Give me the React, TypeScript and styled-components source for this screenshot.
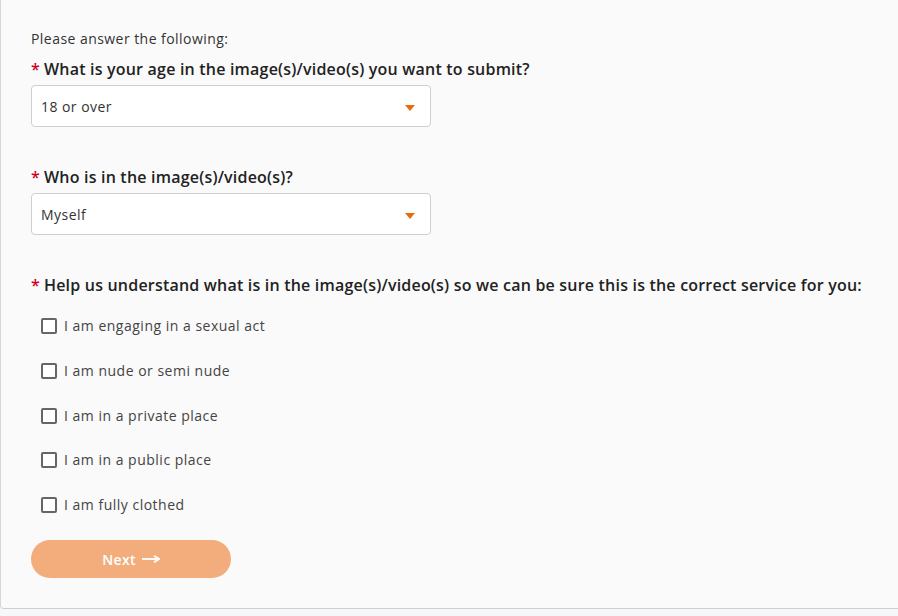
import styled, { createGlobalStyle } from "styled-components"

const GlobalStyle = createGlobalStyle`
    body {
        margin: 0;
        background: #f6f7f9;
        font-family: "Open Sans", "Liberation Sans", sans-serif;
        color: #333;
    }
`

const options = [
    "I am engaging in a sexual act",
    "I am nude or semi nude",
    "I am in a private place",
    "I am in a public place",
    "I am fully clothed",
]

const Caret = () => (
    <svg width="10" height="6" viewBox="0 0 10 6">
        <path d="M0 0 H10 L5 6 Z" fill="#e36c12" />
    </svg>
)

const Arrow = () => (
    <svg width="18" height="8" viewBox="0 0 18 8">
        <path d="M0 4 H15" stroke="#fff" strokeWidth="1.8" />
        <path d="M12 0.8 L17 4 L12 7.2" stroke="#fff" strokeWidth="1.8" fill="none" />
    </svg>
)

export default function App() {
    return (
        <>
            <GlobalStyle />
            <Panel>
                <Intro>Please answer the following:</Intro>

                <Question>
                    <Required>*</Required>What is your age in the image(s)/video(s) you want to submit?
                </Question>
                <Select>
                    <span>18 or over</span>
                    <Caret />
                </Select>

                <Question $spaced>
                    <Required>*</Required>Who is in the image(s)/video(s)?
                </Question>
                <Select>
                    <span>Myself</span>
                    <Caret />
                </Select>

                <Question $spaced>
                    <Required>*</Required>Help us understand what is in the image(s)/video(s) so we can be sure
                    this is the correct service for you:
                </Question>
                <Checklist>
                    {options.map((o) => (
                        <CheckRow key={o}>
                            <Box />
                            {o}
                        </CheckRow>
                    ))}
                </Checklist>

                <NextButton>
                    Next <Arrow />
                </NextButton>
            </Panel>
        </>
    )
}

const Panel = styled.div`
    box-sizing: border-box;
    width: 920px;
    height: 609px;
    background: #fafafa;
    border-left: 1px solid #d6d6d8;
    border-bottom: 1px solid #cfcfd3;
    border-bottom-left-radius: 4px;
    padding: 29px 30px 0;
    display: flex;
    flex-direction: column;
`

const Intro = styled.div`
    font-size: 14px;
    line-height: 20px;
    letter-spacing: 0.45px;
    color: #333;
`

const Question = styled.div<{ $spaced?: boolean }>`
    margin-top: ${(p) => (p.$spaced ? "39px" : "9px")};
    font-size: 16px;
    font-weight: 600;
    line-height: 22px;
    letter-spacing: 0.2px;
    color: #222;
    white-space: nowrap;
`

const Required = styled.span`
    color: #d0021b;
    margin-right: 4px;
`

const Select = styled.div`
    box-sizing: border-box;
    margin-top: 5px;
    width: 400px;
    height: 42px;
    background: #fff;
    border: 1px solid #cfcfd3;
    border-radius: 4px;
    padding: 0 15px 0 9px;
    display: flex;
    align-items: center;
    justify-content: space-between;
    font-size: 14px;
    letter-spacing: 0.45px;
    color: #333;

    svg {
        margin-top: 4px;
    }
`

const Checklist = styled.div`
    margin-top: 20px;
    padding-left: 10px;
    display: flex;
    flex-direction: column;
    gap: 24.8px;
`

const CheckRow = styled.label`
    display: flex;
    align-items: center;
    gap: 7px;
    font-size: 14px;
    line-height: 20px;
    letter-spacing: 0.5px;
    color: #444;
`

const Box = styled.span`
    box-sizing: border-box;
    width: 16px;
    height: 16px;
    border: 2px solid #666;
    border-radius: 2px;
    background: #fff;
`

const NextButton = styled.button`
    margin-top: 25px;
    width: 200px;
    height: 38px;
    border: none;
    border-radius: 19px;
    background: #f3ad7c;
    color: #fff;
    font-family: inherit;
    font-size: 14px;
    font-weight: 600;
    letter-spacing: 0.3px;
    display: flex;
    align-items: center;
    justify-content: center;
    gap: 6px;
`
